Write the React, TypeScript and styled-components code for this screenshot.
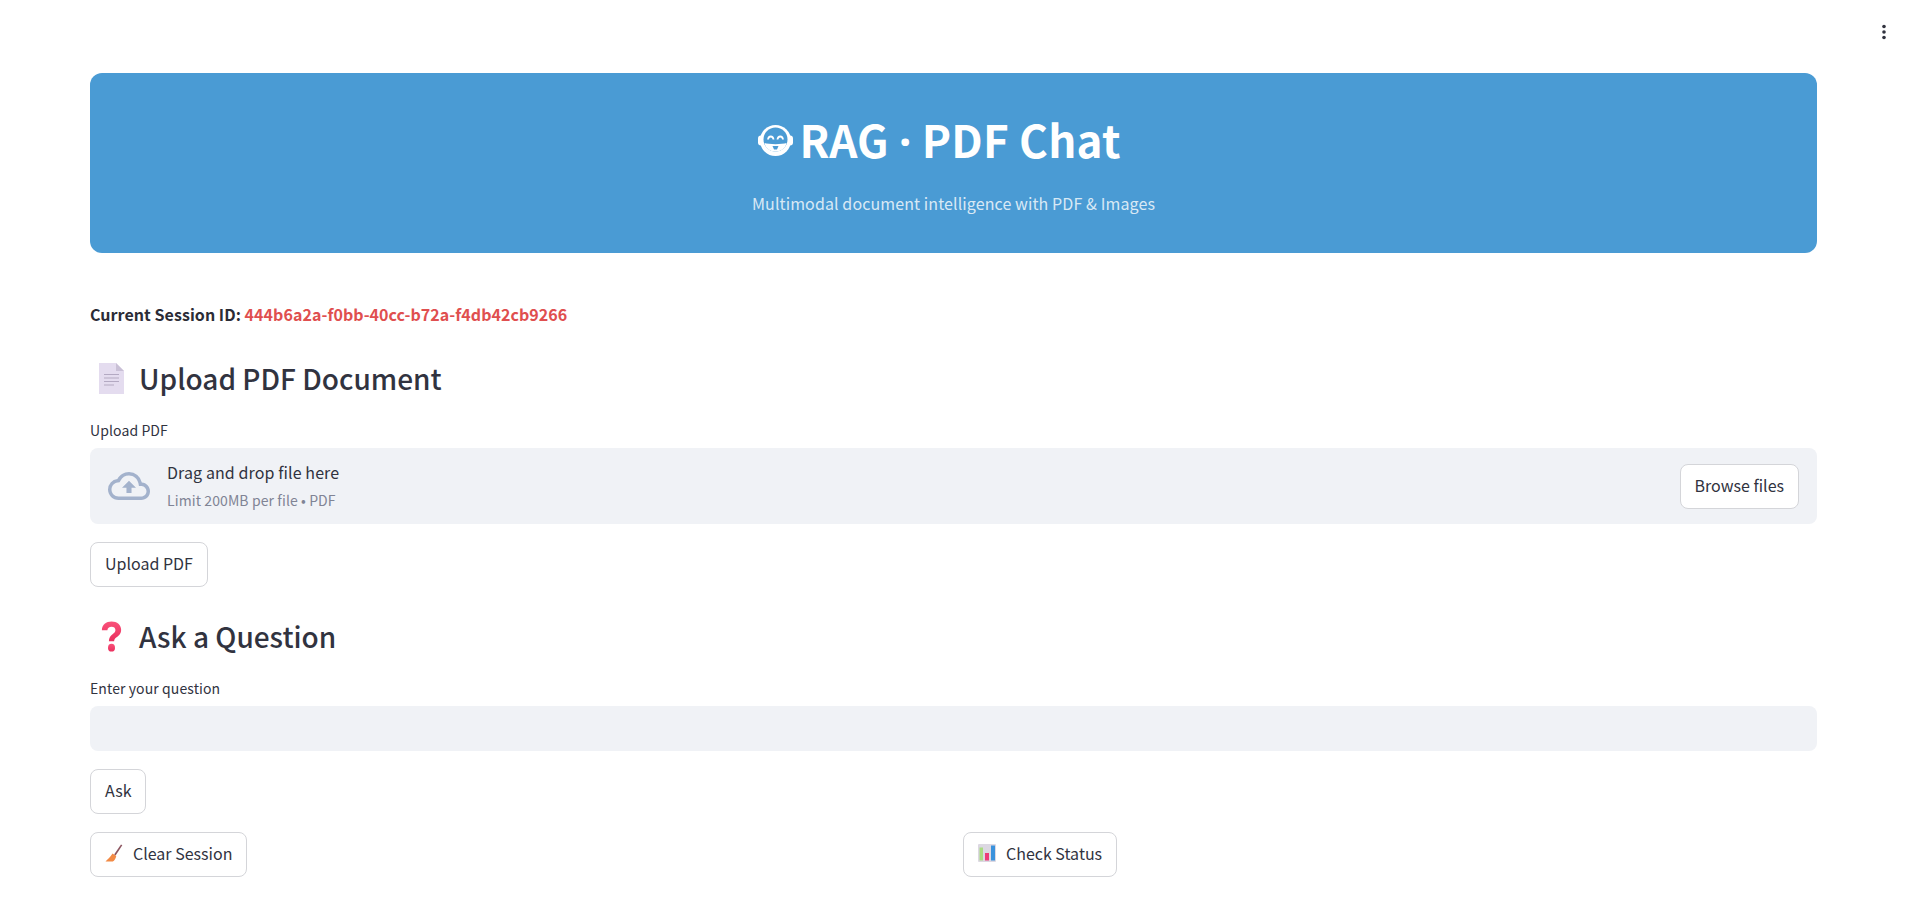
import React from 'react'
import styled, { createGlobalStyle } from 'styled-components'
import { MdOutlineCloudUpload } from 'react-icons/md'

const GlobalStyle = createGlobalStyle`
  html, body {
    margin: 0;
    padding: 0;
    background: #ffffff;
    color: #31333f;
    font-family: "Noto Sans CJK JP", "Noto Sans", sans-serif;
    letter-spacing: 0.1px;
  }
  * { box-sizing: border-box; }
`

const RobotIcon = () => (
  <svg width="35" height="33" viewBox="0 0 35 33" fill="none">
    <rect x="0" y="11.500" width="6" height="10" rx="3" fill="#fff" />
    <rect x="29" y="11.500" width="6" height="10" rx="3" fill="#fff" />
    <circle cx="17.500" cy="16.500" r="15.500" fill="#fff" />
    <circle cx="17.500" cy="15.500" r="12" fill="#4a9bd4" />
    <path d="M6.500 19c4 1.500 18 1.500 22 0-1 5.500-5.500 8.500-11 8.500s-10-3-11-8.500z" fill="#fff" />
    <path d="M10 15.500c.5-4 5-4 5.500 0M19.500 15.500c.5-4 5-4 5.500 0" stroke="#fff" strokeWidth="1.800" />
    <path d="M14.500 22h6l-1.500 3.500h-3z" fill="#4a9bd4" />
  </svg>
)

const DocIcon = () => (
  <svg width="25" height="31" viewBox="0 0 25 31">
    <path d="M0 0h17l8 8v23H0z" fill="#e4dcef" />
    <path d="M17 0l8 8h-8z" fill="#c9c0d6" />
    <path d="M5 11.500h15M5 15h15M5 18.500h15M5 22h10" stroke="#b3a9c2" strokeWidth="1.200" />
  </svg>
)

const QuestionIcon = () => (
  <svg width="21" height="31" viewBox="0 0 24 32" preserveAspectRatio="none">
    <defs>
      <linearGradient id="qGrad" x1="0" y1="0" x2="0" y2="1">
        <stop offset="0" stopColor="#f9527a" />
        <stop offset="1" stopColor="#ea2f5e" />
      </linearGradient>
    </defs>
    <path
      d="M1 9.500C1 4 6 0.500 12 0.500c6.500 0 11 3.500 11 8.500 0 4.300-2.700 6.200-5.200 7.900-1.700 1.200-2.800 2-2.800 4.100H9c0-4 1.900-5.800 4.200-7.400 1.800-1.200 3.300-2.200 3.300-4.300 0-2-1.800-3.300-4.400-3.300-2.900 0-4.600 1.500-4.800 3.500z"
      fill="url(#qGrad)"
    />
    <circle cx="12" cy="27.500" r="4" fill="url(#qGrad)" />
  </svg>
)

const BroomIcon = () => (
  <svg width="18" height="18" viewBox="0 0 18 18">
    <path d="M16 0.500l1.300.7-6.700 10.300-1.500-1z" fill="#8c5560" />
    <path d="M7.500 9.500l3.800 2.500c-.8 3-1.800 4.800-3.500 5.600L0.500 17.500c1.500-1.500 5-4.500 7-8z" fill="#f28a45" />
  </svg>
)

const ChartIcon = () => (
  <svg width="18" height="18" viewBox="0 0 18 18">
    <rect width="18" height="18" rx="1" fill="#dcd8e2" />
    <rect x="1.500" y="3.500" width="3.500" height="13" fill="#a9dc82" />
    <rect x="7" y="9" width="4" height="7.500" fill="#ec3b78" />
    <rect x="13" y="1.500" width="4" height="15" fill="#3a92dc" />
  </svg>
)

const App = () => {
  return (
    <>
      <GlobalStyle />
      <MenuButton aria-label="menu">
        <svg width="6" height="16" viewBox="0 0 6 16" fill="#31333f">
          <circle cx="3" cy="2.500" r="1.800" />
          <circle cx="3" cy="8" r="1.800" />
          <circle cx="3" cy="13.500" r="1.800" />
        </svg>
      </MenuButton>
      <Main>
        <Hero>
          <HeroTitle>
            <RobotIcon />
            <span>
              RAG <TitleDot>·</TitleDot> PDF Chat
            </span>
          </HeroTitle>
          <HeroSubtitle>Multimodal document intelligence with PDF &amp; Images</HeroSubtitle>
        </Hero>

        <SessionLine>
          Current Session ID: <span>444b6a2a-f0bb-40cc-b72a-f4db42cb9266</span>
        </SessionLine>

        <SectionHeading>
          <HeadingEmoji>
            <DocIcon />
          </HeadingEmoji>
          Upload PDF Document
        </SectionHeading>
        <FieldLabel>Upload PDF</FieldLabel>
        <DropZone>
          <MdOutlineCloudUpload size={42} color="#a3b2cc" />
          <DropText>
            <DropTitle>Drag and drop file here</DropTitle>
            <DropHint>Limit 200MB per file • PDF</DropHint>
          </DropText>
          <Button>Browse files</Button>
        </DropZone>
        <ButtonRow>
          <Button>Upload PDF</Button>
        </ButtonRow>

        <SectionHeading $tight>
          <HeadingEmoji>
            <QuestionIcon />
          </HeadingEmoji>
          Ask a Question
        </SectionHeading>
        <FieldLabel>Enter your question</FieldLabel>
        <QuestionInput aria-label="Enter your question" />
        <ButtonRow>
          <Button>Ask</Button>
        </ButtonRow>
        <Columns>
          <div>
            <Button>
              <BroomIcon />
              Clear Session
            </Button>
          </div>
          <div>
            <Button>
              <ChartIcon />
              Check Status
            </Button>
          </div>
        </Columns>
      </Main>
    </>
  )
}

const MenuButton = styled.div`
  position: absolute;
  top: 24px;
  left: 1881px;
  display: flex;
`

const Main = styled.main`
  padding: 73px 101px 31px 90px;
  min-height: 908px;
`

const Hero = styled.header`
  height: 180px;
  background: #4a9bd4;
  border-radius: 12px;
  display: flex;
  flex-direction: column;
  align-items: center;
  color: #ffffff;
`

const HeroTitle = styled.h1`
  margin: 31px 28px 0 0;
  display: flex;
  align-items: center;
  gap: 6px;
  font-size: 44px;
  line-height: 70px;
  font-weight: 700;
  letter-spacing: 0.2px;
`

const TitleDot = styled.span`
  font-family: "Noto Sans", sans-serif;
  font-weight: 700;
`

const HeroSubtitle = styled.p`
  margin: 14px 0 0;
  font-size: 16px;
  line-height: 26px;
  color: rgba(255, 255, 255, 0.8);
`

const SessionLine = styled.p`
  margin: 48px 0 0;
  font-size: 16px;
  line-height: 26px;
  font-weight: 700;
  letter-spacing: 0.05px;
  color: #2b2c36;
  & > span {
    color: #e04f4f;
  }
`

const SectionHeading = styled.h2<{ $tight?: boolean }>`
  margin: ${({ $tight }) => ($tight ? '26px' : '28px')} 0 0;
  display: flex;
  align-items: center;
  font-size: 28px;
  line-height: 46px;
  font-weight: 500;
  letter-spacing: 0;
  color: #31333f;
`

const HeadingEmoji = styled.span`
  width: 49px;
  padding: 0 15px 0 9px;
  display: flex;
  align-items: center;
  justify-content: center;
`

const FieldLabel = styled.div`
  margin-top: 19px;
  font-size: 14px;
  line-height: 20px;
  color: #31333f;
`

const DropZone = styled.div`
  margin-top: 8px;
  height: 76px;
  padding: 0 18px;
  display: flex;
  align-items: center;
  background: #f0f2f6;
  border-radius: 8px;
`

const DropText = styled.div`
  flex: 1;
  margin-left: 17px;
  padding-bottom: 2px;
  display: flex;
  flex-direction: column;
`

const DropTitle = styled.span`
  font-size: 16px;
  line-height: 26px;
`

const DropHint = styled.span`
  margin-top: 4px;
  font-size: 14px;
  line-height: 22px;
  color: #808495;
`

const ButtonRow = styled.div`
  margin-top: 18px;
`

const Button = styled.button`
  height: 45px;
  padding: 0 14px 3px;
  display: inline-flex;
  align-items: center;
  gap: 10px;
  background: #ffffff;
  border: 1px solid #d4d5d9;
  border-radius: 8px;
  font-family: inherit;
  font-size: 16px;
  letter-spacing: 0;
  color: #31333f;
`

const QuestionInput = styled.input`
  display: block;
  width: 100%;
  height: 45px;
  margin-top: 8px;
  border: 0;
  outline: 0;
  background: #f0f2f6;
  border-radius: 8px;
`

const Columns = styled.div`
  margin-top: 18px;
  display: grid;
  grid-template-columns: 1fr 1fr;
  gap: 19px;
`

export default App
